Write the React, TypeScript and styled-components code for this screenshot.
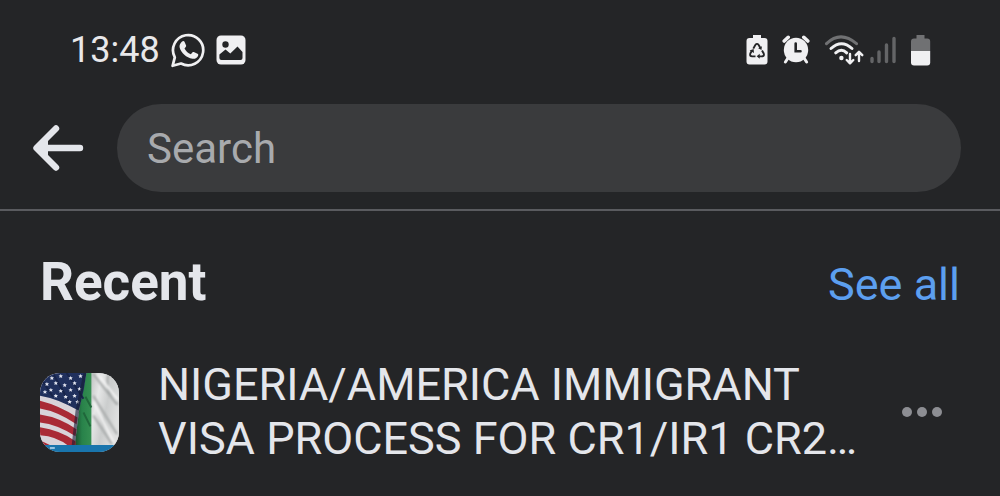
import React from "react";
import styled, { createGlobalStyle } from "styled-components";

const GlobalStyle = createGlobalStyle`
  * { box-sizing: border-box; }
  body {
    margin: 0;
    background: #242527;
    color: #e4e6eb;
    font-family: Roboto, "Liberation Sans", sans-serif;
  }
  button { border: 0; padding: 0; background: none; color: inherit; cursor: pointer; }
`;

const Screen = styled.div`
  min-height: 100vh;
  background: #242527;
`;

const StatusBar = styled.div`
  display: flex;
  align-items: center;
  justify-content: space-between;
  height: 100px;
  padding: 0 69px 0 70px;
  color: #f0f0f2;
`;

const StatusGroup = styled.div<{ $gap: number }>`
  display: flex;
  align-items: center;
  gap: ${(p) => p.$gap}px;
`;

const Clock = styled.time`
  font-size: 36px;
  line-height: 40px;
  color: #e8e8ea;
`;

const Icon = styled.svg`
  display: block;
  flex: none;
`;

const SearchBar = styled.form`
  display: flex;
  align-items: center;
  gap: 32px;
  padding: 4px 39px 17px 32px;
  border-bottom: 2px solid #5a5b5f;
`;

const BackButton = styled.button`
  flex: none;
`;

const SearchInput = styled.input`
  flex: 1;
  min-width: 0;
  height: 88px;
  padding: 0 30px;
  border: 0;
  border-radius: 44px;
  outline: none;
  background: #3a3b3d;
  color: #e4e6eb;
  font: 400 42px Roboto, "Liberation Sans", sans-serif;
  &::placeholder { color: #a8aaad; opacity: 1; }
`;

const SectionHeader = styled.header`
  display: flex;
  align-items: baseline;
  justify-content: space-between;
  padding: 39px 40px 0;
`;

const Title = styled.h2`
  margin: 0;
  font-size: 53px;
  font-weight: 700;
  line-height: 64px;
`;

const SeeAll = styled.a`
  color: #5c9fef;
  font-size: 45px;
  line-height: 56px;
  text-decoration: none;
`;

const ResultList = styled.ul`
  margin: 0;
  padding: 44px 57px 0 40px;
  list-style: none;
`;

const ResultRow = styled.li`
  display: flex;
  align-items: center;
`;

const Thumbnail = styled.svg`
  flex: none;
  border-radius: 20px;
`;

const ResultLink = styled.a`
  flex: 1;
  min-width: 0;
  padding: 0 22px 0 39px;
  color: inherit;
  font-size: 45px;
  line-height: 54px;
  text-decoration: none;
`;

const MoreButton = styled.button`
  flex: none;
`;

const WhatsAppIcon = () => (
  <Icon width="36" height="36" viewBox="0 0 36 36" aria-label="WhatsApp">
    <path d="M2.6 33.8 4.8 25.3A15.1 15.1 0 1 1 11 31.5Z" fill="none" stroke="currentColor" strokeWidth="2.7" strokeLinejoin="round" />
    <path d="M12.1 9.6c.8-.8 1.9-.8 2.4.2l1.6 3.7c.2.6 0 1.1-.4 1.6l-1.2 1.4c1.4 2.7 3.4 4.5 6.3 5.8l1.6-1.9c.4-.5.9-.6 1.4-.4l3.700 1.800c.8.4.9.8.6 1.900-.7 2.200-3.300 3.500-5.600 3.100-6.300-1.200-11.200-5.600-12.800-11-.8-2.300.8-4.800 2.400-6.200Z" fill="currentColor" />
  </Icon>
);

const PhotoIcon = () => (
  <Icon width="30" height="30" viewBox="0 0 30 30" aria-label="Screenshot saved">
    <rect x=".5" y=".5" width="29" height="29" rx="4.5" fill="currentColor" />
    <circle cx="9.5" cy="9.5" r="3.2" fill="#242527" />
    <path d="M3.4 23v-3.5l6.1-5 4.8 4 7.2-7 5 5.5v6q0 2-2 2H5.4q-2 0-2-2Z" fill="#242527" />
  </Icon>
);

const RecycleBatteryIcon = () => (
  <Icon width="22" height="30" viewBox="0 0 22 30" aria-label="Battery saver">
    <path d="M7 0h8v3h3.500q3 0 3 3V26.500q0 3-3 3H3.500q-3 0-3-3V6q0-3 3-3H7Z" fill="currentColor" />
    <g fill="none" stroke="#242527" strokeWidth="1.900">
      <path d="m7.300 13.600 2-3.600q1.700-2.200 3.400 0l1.700 3" />
      <path d="m16 15.500 1.700 3q.9 2.800-1.900 2.900h-3" />
      <path d="M9.500 21.400H6.200q-2.800-.1-1.900-2.900L6 15.500" />
    </g>
    <path d="m15.900 11.200-.4 3.700-3.300-1.600ZM13.700 18.800v5l-3-2.500ZM3.600 15.400l4-1.300.4 3.800Z" fill="#242527" />
  </Icon>
);

const AlarmIcon = () => (
  <Icon width="28" height="30" viewBox="0 0 28 30" aria-label="Alarm set">
    <circle cx="14" cy="15" r="12.200" fill="currentColor" />
    <path d="m2.200 6 4-3.700M25.800 6l-4-3.700" stroke="currentColor" strokeWidth="3.600" strokeLinecap="round" />
    <path d="m6 23-2.600 4M22 23l2.600 4" stroke="currentColor" strokeWidth="3" strokeLinecap="round" />
    <path d="M13.700 8.500v7.800H18.500" fill="none" stroke="#242527" strokeWidth="2.600" strokeLinecap="round" />
  </Icon>
);

const WifiIcon = () => (
  <Icon width="40" height="32" viewBox="0 0 40 32" aria-label="Wi-Fi">
    <g fill="none" strokeLinecap="round" strokeWidth="3">
      <path d="M2.500 9.700q14-13.600 30 0" stroke="#707173" />
      <path d="M7 14.500q10.500-9.600 21 0M11.700 18.800q5.800-5 11 0" stroke="currentColor" />
    </g>
    <circle cx="17.400" cy="24" r="2.200" fill="currentColor" />
    <path d="M26 20v9m-3.300-3 3.300 3.300 3.300-3.300M35 27v-9m-3.300 3.200 3.300-3.400 3.300 3.400" fill="none" stroke="currentColor" strokeWidth="2.400" strokeLinejoin="round" strokeLinecap="round" />
  </Icon>
);

const SignalIcon = () => (
  <Icon width="26" height="28" viewBox="0 0 26 28" aria-label="No mobile signal">
    <path d="M2 22.500v3M9 16v9.500M16.500 9v16.500M24 2.500v23" stroke="#646567" strokeWidth="3.400" strokeLinecap="round" />
  </Icon>
);

const BatteryIcon = () => (
  <Icon width="21" height="31" viewBox="0 0 21 31" aria-label="Battery half full">
    <path d="M6.500 0h8v3.500h2.700q3 0 3 3V16H1V6.500q0-3 3-3h2.500Z" fill="#707173" />
    <path d="M1 16h19.200v11.500q0 3-3 3H4q-3 0-3-3Z" fill="currentColor" />
  </Icon>
);

const starPositions = [
  [12, 5], [21, 3], [31, 5], [41, 3], [7, 11], [16, 10], [25, 12], [35, 10],
  [11, 17], [21, 18], [31, 17], [40, 16], [16, 23], [26, 24], [35, 23], [30, 29], [38, 29], [5, 19],
];

const FlagsThumbnail = () => (
  <Thumbnail width="79" height="79" viewBox="0 0 80 80" role="img" aria-label="United States and Nigeria flags">
    <defs>
      <linearGradient id="greenCloth"><stop stopColor="#123c24" /><stop offset=".5" stopColor="#28824a" /><stop offset="1" stopColor="#358f52" /></linearGradient>
      <linearGradient id="whiteCloth" x2="1" y2=".5"><stop stopColor="#b9bbbb" /><stop offset=".35" stopColor="#e6e7e7" /><stop offset=".65" stopColor="#cbcdcd" /><stop offset="1" stopColor="#dedfdf" /></linearGradient>
      <filter id="clothFolds"><feGaussianBlur stdDeviation="1" /></filter>
    </defs>
    <rect width="80" height="80" fill="#c9cccc" />
    <path d="M50 0h30v74H50Z" fill="url(#whiteCloth)" />
    <g filter="url(#clothFolds)" fill="none" strokeWidth="2">
      <path d="m54 1 24 31M54 23l24 39M54 43l19 29M69 2q-3 19 10 30" stroke="#a4a7a7" />
      <path d="m58 1 21 26M54 29l21 42" stroke="#f6f6f6" />
    </g>
    <path d="M45 0h7v74H33l3-26Z" fill="url(#greenCloth)" />
    <path d="m46 24 6 11M44 40l7 14" stroke="#20673b" strokeWidth="2" />
    <path d="M0 0h47L40 35l-5 39H0Z" fill="#d8d3d9" />
    <path d="M0 28q20 5 38 17l-1 7Q18 39 0 36ZM0 42q20 3 37 15l-1 7Q18 52 0 50ZM0 55q20 3 36 14v5h-7Q17 64 0 63ZM0 68l12 6H0Z" fill="#a92a36" />
    <path d="M0 0h47q-2 17-7 35l-1 3Q18 26 0 23Z" fill="#20305d" />
    <path d="m27 0 17 26M14 2l17 30M0 4l13 20" stroke="#17244a" strokeWidth="2" />
    {starPositions.map(([x, y]) => (
      <path key={`${x}-${y}`} d={`m${x} ${y - 2} .7 1.400 1.500.1-1.100 1 .4 1.600-1.500-.8-1.400.8.3-1.600-1.100-1 1.600-.1Z`} fill="#e0e3ee" />
    ))}
    <path d="M47 0 40 36l-5 38h-3l4-36L44 0Z" fill="#151d35" opacity=".6" />
    <path d="M0 73h80v7H0Z" fill="#1975ad" />
    <path d="M10 76h5" stroke="#bfdcf0" strokeWidth="1.500" />
  </Thumbnail>
);

export default function App() {
  return (
    <Screen>
      <GlobalStyle />
      <StatusBar>
        <StatusGroup $gap={10}>
          <Clock>13:48</Clock>
          <WhatsAppIcon />
          <PhotoIcon />
        </StatusGroup>
        <StatusGroup $gap={14}>
          <RecycleBatteryIcon />
          <AlarmIcon />
          <StatusGroup $gap={6}>
            <WifiIcon />
            <SignalIcon />
          </StatusGroup>
          <BatteryIcon />
        </StatusGroup>
      </StatusBar>
      <SearchBar role="search" onSubmit={(e) => e.preventDefault()}>
        <BackButton type="button" aria-label="Back">
          <Icon width="53" height="52" viewBox="0 0 53 52">
            <path d="M48 26H6M24 6.500 4.500 26 24 45.500" fill="none" stroke="#e4e6eb" strokeWidth="6.400" strokeLinecap="round" strokeLinejoin="round" />
            <path d="M5 26 16 18v16Z" fill="#e4e6eb" />
          </Icon>
        </BackButton>
        <SearchInput type="search" aria-label="Search" placeholder="Search" />
      </SearchBar>
      <main>
        <SectionHeader>
          <Title>Recent</Title>
          <SeeAll href="#all">See all</SeeAll>
        </SectionHeader>
        <ResultList>
          <ResultRow>
            <FlagsThumbnail />
            <ResultLink href="#group">NIGERIA/AMERICA IMMIGRANT VISA PROCESS FOR CR1/IR1 CR2…</ResultLink>
            <MoreButton type="button" aria-label="More options">
              <Icon width="42" height="12" viewBox="0 0 42 12" fill="#8d8e93">
                <circle cx="6" cy="6" r="5" />
                <circle cx="21" cy="6" r="5" />
                <circle cx="36" cy="6" r="5" />
              </Icon>
            </MoreButton>
          </ResultRow>
        </ResultList>
      </main>
    </Screen>
  );
}
